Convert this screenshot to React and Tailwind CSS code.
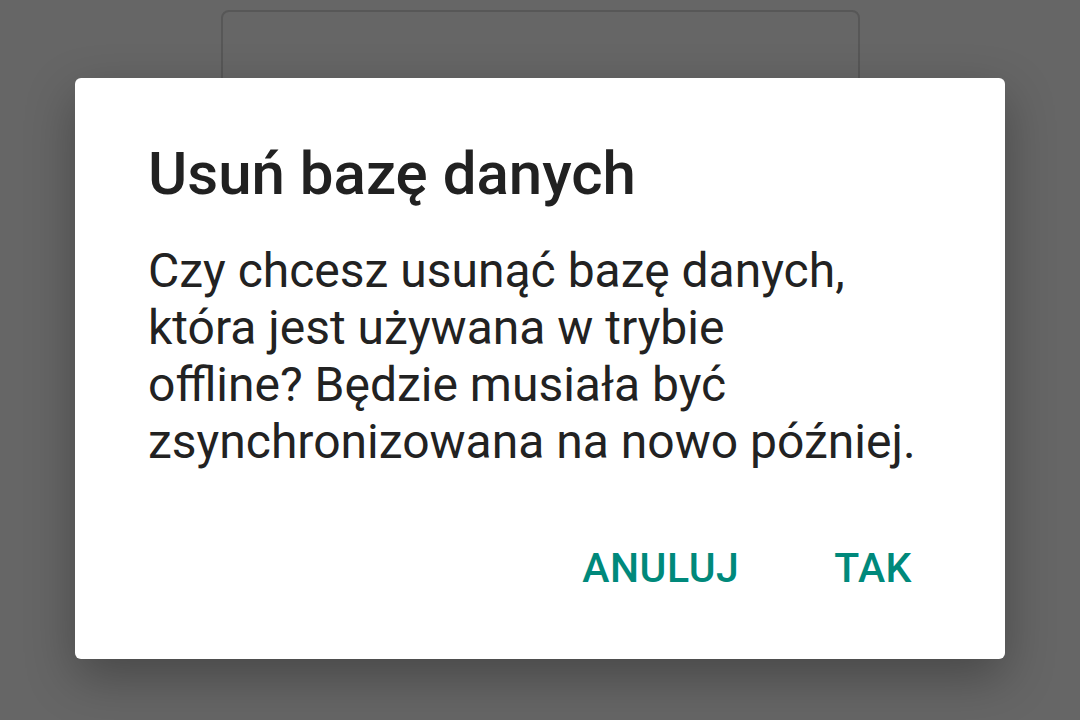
export default function App() {
  return (
    <div className="relative h-[720px] w-[1080px] overflow-hidden bg-[#666666]" style={{ fontFamily: 'Roboto, "Noto Sans", sans-serif' }}>
      <div className="absolute left-[221px] top-[10px] h-[200px] w-[639px] rounded-[8px] border-2 border-[#575757]" />
      <div className="absolute left-[75px] top-[78px] w-[930px] h-[581px] rounded-[6px] bg-white shadow-[0_18px_50px_rgba(0,0,0,0.3)] flex flex-col">
        <div className="px-[73px] pt-[61px]">
          <h1 className="text-[60px] leading-[70px] font-medium text-[#212121]">Usuń bazę danych</h1>
          <p className="mt-[33px] text-[48px] leading-[57px] text-[#222222]">
            Czy chcesz usunąć bazę danych,<br />
            która jest używana w trybie<br />
            offline? Będzie musiała być<br />
            zsynchronizowana na nowo później.
          </p>
        </div>
        <div className="mt-auto flex justify-end gap-[95px] pr-[93px] pb-[67px]">
          <button className="text-[41px] leading-[48px] font-medium text-[#00897b] tracking-[0.5px]">ANULUJ</button>
          <button className="text-[41px] leading-[48px] font-medium text-[#00897b] tracking-[0.5px]">TAK</button>
        </div>
      </div>
    </div>
  )
}
